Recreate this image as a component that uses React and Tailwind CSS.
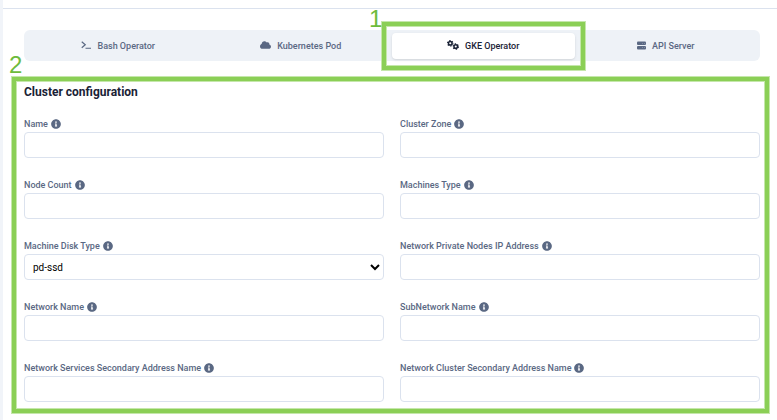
import { FaCloud, FaInfoCircle } from "react-icons/fa";

function TerminalIcon({ className }) {
  return (
    <svg className={className} viewBox="0 0 20 16" fill="none" stroke="currentColor" strokeWidth="2.4" aria-hidden="true">
      <path d="M1.5 1.5 8.5 7.5 1.5 13.5M9 14.5h11" />
    </svg>
  );
}

function GearsIcon({ className }) {
  return (
    <svg className={className} viewBox="0 0 24 20" fill="none" stroke="currentColor" aria-hidden="true">
      <circle cx="6.5" cy="6.5" r="3.6" strokeWidth="3" />
      <circle cx="6.5" cy="6.5" r="5.4" strokeWidth="2.2" strokeDasharray="2.83 2.83" />
      <circle cx="17.5" cy="13" r="3.6" strokeWidth="3" />
      <circle cx="17.5" cy="13" r="5.4" strokeWidth="2.2" strokeDasharray="2.83 2.83" />
    </svg>
  );
}

function ServerIcon({ className }) {
  return (
    <svg className={className} viewBox="0 0 18 18" fill="currentColor" aria-hidden="true">
      <rect x="0" y="1" width="18" height="7" rx="2" />
      <rect x="0" y="10" width="18" height="7" rx="2" />
      <path d="M11 4h1v1h-1zM14 4h1v1h-1zM11 13h1v1h-1zM14 13h1v1h-1z" fill="#eef2f7" />
    </svg>
  );
}

const tabs = [
  { label: "Bash Operator", Icon: TerminalIcon, size: "h-2 w-[10px]" },
  { label: "Kubernetes Pod", Icon: FaCloud, size: "h-[10px] w-[11px]" },
  { label: "GKE Operator", Icon: GearsIcon, size: "h-[10px] w-3", active: true },
  { label: "API Server", Icon: ServerIcon, size: "size-[9px]" },
];

const fields = [
  { id: "name", label: "Name" },
  { id: "zone", label: "Cluster Zone" },
  { id: "nodes", label: "Node Count" },
  { id: "machines", label: "Machines Type" },
  { id: "disk", label: "Machine Disk Type", options: ["pd-ssd", "pd-standard"] },
  { id: "private-ip", label: "Network Private Nodes IP Address" },
  { id: "network", label: "Network Name" },
  { id: "subnetwork", label: "SubNetwork Name" },
  { id: "services", label: "Network Services Secondary Address Name" },
  { id: "cluster", label: "Network Cluster Secondary Address Name" },
];

function Tab({ label, Icon, size, active }) {
  return (
    <div className="relative">
      <button
        type="button"
        role="tab"
        aria-selected={Boolean(active)}
        className={`flex h-[26px] w-full items-center justify-center gap-[6px] rounded pt-[2px] ${
          active ? "bg-white text-[#1a2236] shadow-sm" : "text-[#5a6883]"
        }`}
      >
        <span className="pb-1">
          <Icon className={size} />
        </span>
        {label}
      </button>
      {active && (
        <div className="pointer-events-none absolute -inset-x-[10px] -inset-y-[11px] border-4 border-[#8bcf56] shadow-[0_0_0_1px_#c5e7ab,inset_0_0_0_1px_#c5e7ab]">
          <span className="absolute -top-[19px] -left-[17px] font-['Liberation_Sans',sans-serif] text-2xl leading-6 font-normal text-[#6dbb3c]">
            1
          </span>
        </div>
      )}
    </div>
  );
}

function Field({ id, label, options }) {
  const box = "h-[26px] w-full rounded border border-[#dbe2ee] bg-white px-2 text-[10px] font-normal text-black";
  return (
    <div>
      <div className="flex h-[15px] items-center gap-[3px]">
        <label htmlFor={id}>{label}</label>
        <span className="pb-[2px]">
          <FaInfoCircle className="size-[10px]" />
        </span>
      </div>
      {options ? (
        <div className="relative">
          <select id={id} className={`${box} appearance-none`}>
            {options.map((option) => (
              <option key={option}>{option}</option>
            ))}
          </select>
          <svg className="pointer-events-none absolute top-[10px] right-1 h-[7px] w-[10px]" viewBox="0 0 10 7" fill="none" stroke="#000" strokeWidth="2" aria-hidden="true">
            <path d="m1 1 4 4 4-4" />
          </svg>
        </div>
      ) : (
        <input id={id} type="text" className={box} />
      )}
    </div>
  );
}

export default function App() {
  return (
    <main className="min-h-screen border-l-3 border-[#f1f4f9] bg-white font-[Roboto,sans-serif] text-[9px] font-medium text-[#5a6883]">
      <div className="h-[9px] border-b border-[#dbe2ee]" />
      <div role="tablist" className="mt-[21px] mr-[17px] ml-[21px] grid grid-cols-4 rounded-md bg-[#eef2f7] p-[3px] pb-[2px]">
        {tabs.map((tab) => (
          <Tab key={tab.label} {...tab} />
        ))}
      </div>
      <section className="relative mt-4 mr-2 ml-[9px] border-4 border-[#8bcf56] pt-[3px] pr-[5px] pb-[7px] pl-2 shadow-[0_0_0_1px_#c5e7ab,inset_0_0_0_1px_#c5e7ab]">
        <span className="absolute -top-[28px] -left-[7px] font-['Liberation_Sans',sans-serif] text-2xl leading-6 font-normal text-[#6dbb3c]">
          2
        </span>
        <h2 className="text-xs leading-4 font-bold text-[#1a2236]">Cluster configuration</h2>
        <div className="mt-[17px] grid grid-cols-2 gap-x-4 gap-y-5">
          {fields.map((field) => (
            <Field key={field.id} {...field} />
          ))}
        </div>
      </section>
    </main>
  );
}
